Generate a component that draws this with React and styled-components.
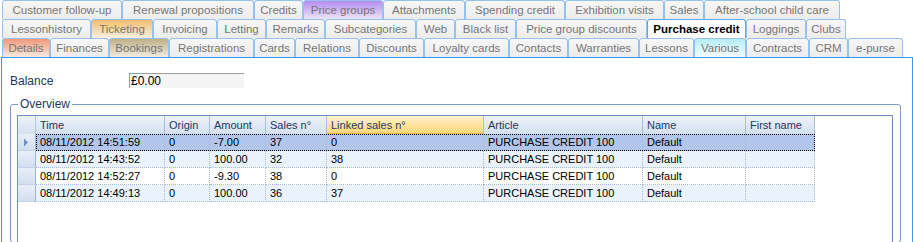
import React from 'react'
import styled, { createGlobalStyle, css } from 'styled-components'

const tabRows = [
	[
		{ label: 'Customer follow-up', w: 120 },
		{ label: 'Renewal propositions', w: 132 },
		{ label: 'Credits', w: 49 },
		{ label: 'Price groups', w: 80, tone: 'purple' },
		{ label: 'Attachments', w: 82 },
		{ label: 'Spending credit', w: 100 },
		{ label: 'Exhibition visits', w: 99 },
		{ label: 'Sales', w: 40 },
		{ label: 'After-school child care', w: 136 },
	],
	[
		{ label: 'Lessonhistory', w: 89 },
		{ label: 'Ticketing', w: 62, tone: 'orange' },
		{ label: 'Invoicing', w: 64 },
		{ label: 'Letting', w: 49 },
		{ label: 'Remarks', w: 59 },
		{ label: 'Subcategories', w: 91 },
		{ label: 'Web', w: 39 },
		{ label: 'Black list', w: 61 },
		{ label: 'Price group discounts', w: 131 },
		{ label: 'Purchase credit', w: 99, active: true },
		{ label: 'Loggings', w: 60 },
		{ label: 'Clubs', w: 40 },
	],
	[
		{ label: 'Details', w: 48, tone: 'salmon' },
		{ label: 'Finances', w: 59 },
		{ label: 'Bookings', w: 60, tone: 'khaki' },
		{ label: 'Registrations', w: 85 },
		{ label: 'Cards', w: 41 },
		{ label: 'Relations', w: 64 },
		{ label: 'Discounts', w: 65 },
		{ label: 'Loyalty cards', w: 85 },
		{ label: 'Contacts', w: 59 },
		{ label: 'Warranties', w: 71 },
		{ label: 'Lessons', w: 55 },
		{ label: 'Various', w: 52, tone: 'cyan' },
		{ label: 'Contracts', w: 63 },
		{ label: 'CRM', w: 39 },
		{ label: 'e-purse', w: 55 },
	],
]

const columns = [
	{ title: 'Time', w: 129 },
	{ title: 'Origin', w: 45 },
	{ title: 'Amount', w: 56 },
	{ title: 'Sales n°', w: 61 },
	{ title: 'Linked sales n°', w: 157, hot: true },
	{ title: 'Article', w: 159 },
	{ title: 'Name', w: 103 },
	{ title: 'First name', w: 69 },
]

const rows = [
	['08/11/2012 14:51:59', '0', '-7.00', '37', '0', 'PURCHASE CREDIT 100', 'Default', ''],
	['08/11/2012 14:43:52', '0', '100.00', '32', '38', 'PURCHASE CREDIT 100', 'Default', ''],
	['08/11/2012 14:52:27', '0', '-9.30', '38', '0', 'PURCHASE CREDIT 100', 'Default', ''],
	['08/11/2012 14:49:13', '0', '100.00', '36', '37', 'PURCHASE CREDIT 100', 'Default', ''],
]

const template = columns.map((c) => c.w + 'px').join(' ')

const tones = {
	purple: 'linear-gradient(#b48ef0 0%, #cdb2f4 45%, #eee4fb 100%)',
	orange: 'linear-gradient(#f2bd72 0%, #f6d3a0 45%, #fbf1e2 100%)',
	salmon: 'linear-gradient(#ef987c 0%, #f3bca6 45%, #f7eadf 100%)',
	khaki: 'linear-gradient(#bfb089 0%, #d6cbae 45%, #efebdf 100%)',
	cyan: 'linear-gradient(#b4ecf9 0%, #d2f4fb 45%, #f2fcfe 100%)',
}

function rowBg(i) {
	if (i === 0) return '#b1c6ea'
	return i % 2 === 1 ? '#eaf3fd' : '#ffffff'
}

function App() {
	return (
		<>
			<GlobalStyle />
			<TabStrip>
				{tabRows.map((row, r) => (
					<TabRow key={r}>
						{row.map((t) => (
							<Tab key={t.label} $w={t.w} $tone={t.tone} $active={t.active}>
								{t.label}
							</Tab>
						))}
					</TabRow>
				))}
			</TabStrip>
			<Panel>
				<FieldRow>
					<FieldLabel>Balance</FieldLabel>
					<FieldInput>£0.00</FieldInput>
				</FieldRow>
				<GroupBox>
					<GroupLegend>Overview</GroupLegend>
					<Grid>
						<HeaderRow>
							<Corner />
							<Cells>
								{columns.map((c) => (
									<HeaderCell key={c.title} $hot={c.hot}>
										{c.title}
									</HeaderCell>
								))}
							</Cells>
						</HeaderRow>
						{rows.map((r, i) => (
							<DataRow key={i} $bg={rowBg(i)}>
								<RowHeader>
									{i === 0 && (
										<svg width="6" height="9" viewBox="0 0 6 9">
											<path d="M1 0.5 L5 4.5 L1 8.5 Z" fill="#6d8dc6" />
										</svg>
									)}
								</RowHeader>
								<Cells $focused={i === 0}>
									{r.map((v, j) => (
										<Cell key={j}>{v}</Cell>
									))}
								</Cells>
							</DataRow>
						))}
					</Grid>
				</GroupBox>
			</Panel>
		</>
	)
}

const GlobalStyle = createGlobalStyle`
	body {
		margin: 0;
		background: #ffffff;
		font-family: "Liberation Sans", Arial, sans-serif;
		overflow: hidden;
	}
`
const TabStrip = styled.div`
	display: flex;
	flex-direction: column;
	padding-left: 2px;
`
const TabRow = styled.div`
	display: flex;
	height: 19px;
`
const Tab = styled.div`
	box-sizing: border-box;
	width: ${(p) => p.$w}px;
	height: 19px;
	display: flex;
	align-items: center;
	justify-content: center;
	border: 1px solid #96c1ef;
	border-bottom: none;
	border-radius: 3px 3px 0 0;
	background: linear-gradient(#f7f7f7, #ececec);
	color: #767676;
	font-size: 11.5px;
	white-space: nowrap;
	${(p) =>
		p.$tone &&
		css`
			background: ${tones[p.$tone]};
		`}
	${(p) =>
		p.$active &&
		css`
			background: #ffffff;
			border-color: #5aa6f5;
			color: #000000;
			font-weight: bold;
		`}
`
const Panel = styled.div`
	box-sizing: border-box;
	width: 912px;
	height: 185px;
	margin-left: 1px;
	border: 1px solid #3d97f2;
	border-bottom: none;
	background: #ffffff;
	padding-top: 15px;
	overflow: hidden;
`
const FieldRow = styled.div`
	display: flex;
	align-items: center;
	height: 15px;
	padding-left: 8px;
`
const FieldLabel = styled.span`
	width: 119px;
	font-size: 12px;
	color: #1e395b;
`
const FieldInput = styled.div`
	box-sizing: border-box;
	width: 115px;
	height: 15px;
	border-top: 1px solid #9c9c9c;
	border-left: 1px solid #9c9c9c;
	background: #f4f4f4;
	font-size: 12px;
	line-height: 14px;
	padding-left: 1px;
	color: #000000;
`
const GroupBox = styled.fieldset`
	box-sizing: border-box;
	margin: 9px 11px 0 8px;
	padding: 4px 7px 0 6px;
	height: 146px;
	border: 1px solid #7a9bd0;
	border-radius: 3px;
	min-inline-size: 0;
`
const GroupLegend = styled.legend`
	padding: 0 2px;
	margin-left: 1px;
	font-size: 12px;
	line-height: 14px;
	color: #1e395b;
`
const Grid = styled.div`
	height: 128px;
	border: 1px solid #6d8fca;
	background: #ffffff;
	font-size: 11px;
`
const HeaderRow = styled.div`
	display: flex;
	height: 18px;
	width: max-content;
`
const Corner = styled.div`
	box-sizing: border-box;
	width: 18px;
	background: linear-gradient(#eef3fa, #d3dff0);
	border-right: 1px solid #b3c6e3;
`
const Cells = styled.div`
	display: grid;
	grid-template-columns: ${template};
	${(p) =>
		p.$focused &&
		css`
			outline: 1px dotted #000000;
			outline-offset: -1px;
		`}
`
const HeaderCell = styled.div`
	box-sizing: border-box;
	display: flex;
	align-items: center;
	padding-left: 4px;
	color: #1e395b;
	background: linear-gradient(#eef3fa, #d3dff0);
	border-right: 1px solid #a9bedf;
	${(p) =>
		p.$hot &&
		css`
			background: linear-gradient(#fff3cc, #fcd67a);
			border-bottom: 1px solid #f0b24a;
		`}
`
const DataRow = styled.div`
	display: flex;
	height: 17px;
	width: max-content;
	background: ${(p) => p.$bg};
`
const RowHeader = styled.div`
	box-sizing: border-box;
	width: 18px;
	display: flex;
	align-items: center;
	padding-left: 5px;
	background: linear-gradient(#e9eff8, #d2def0);
	border-right: 1px solid #9fb5da;
	border-bottom: 1px solid #c3d2e9;
`
const Cell = styled.div`
	box-sizing: border-box;
	display: flex;
	align-items: center;
	padding-left: 4px;
	color: #000000;
	white-space: nowrap;
	overflow: hidden;
	border-right: 1px dotted #a7b9d6;
	border-bottom: 1px dotted #a7b9d6;
`

export default App
